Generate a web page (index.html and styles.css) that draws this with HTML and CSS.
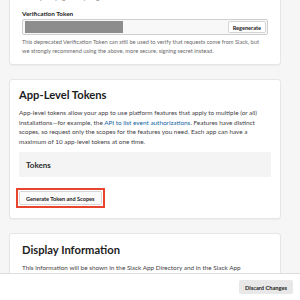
FILE: index.html
```html
<!doctype html>
<html lang="en">
  <head>
    <meta charset="UTF-8" />
    <meta name="viewport" content="width=device-width, initial-scale=1.0" />
    <title>App Credentials</title>
    <link rel="stylesheet" href="styles.css">
  </head>
  <body>
    <div class="page">
      <div class="card card-credentials">
        <p class="help cut">Slack by verifying its unique signature.</p>
        <div class="field-label">Verification Token</div>
        <div class="token-input">
          <div class="token-mask"></div>
          <button class="btn-small">Regenerate</button>
        </div>
        <p class="help">
          This deprecated Verification Token can still be used to verify that requests come from Slack, but<br>
          we strongly recommend using the above, more secure, signing secret instead.
        </p>
      </div>

      <div class="card card-tokens">
        <h2>App-Level Tokens</h2>
        <p class="text">
          App-level tokens allow your app to use platform features that apply to multiple (or all)<br>
          installations—for example, the <a href="#">API to list event authorizations</a>. Features have distinct<br>
          scopes, so request only the scopes for the features you need. Each app can have a<br>
          maximum of 10 app-level tokens at one time.
        </p>
        <div class="tokens-box">Tokens</div>
        <div class="highlight">
          <button class="btn-small btn-generate">Generate Token and Scopes</button>
        </div>
      </div>

      <div class="card card-display">
        <h2>Display Information</h2>
        <p class="text">
          This information will be shown in the Slack App Directory and in the Slack App<br>
          Launcher, and when your app is installed to a workspace.
        </p>
      </div>
    </div>

    <div class="save-bar">
      <button class="btn-discard">Discard Changes</button>
    </div>
  </body>
</html>
```

FILE: styles.css
```css
* {
  margin: 0;
  padding: 0;
  box-sizing: border-box;
}

body {
  font-family: 'Lato', 'Liberation Sans', sans-serif;
  background-color: #f6f6f6;
  color: #1d1c1d;
  overflow: hidden;
}

.page {
  margin-top: -16px;
  padding: 0 19px 0 9px;
}

.card {
  background: #ffffff;
  border: 1px solid #e6e6e6;
  border-radius: 3px;
  box-shadow: 0 1px 1px rgba(0, 0, 0, 0.04);
  margin-bottom: 14px;
}

.card-credentials {
  padding: 8px 12px 9px 12px;
}

.help {
  font-size: 5.7px;
  line-height: 9px;
  color: #6b6a6b;
  white-space: nowrap;
}

.help.cut {
  margin-bottom: 7px;
}

.field-label {
  font-size: 6.4px;
  font-weight: 700;
  line-height: 9px;
  color: #1d1c1d;
  margin-bottom: 1px;
}

.token-input {
  display: flex;
  align-items: center;
  justify-content: space-between;
  height: 16px;
  padding: 0 1px 0 2px;
  border: 1px solid #cfcfcf;
  border-radius: 2px;
  background: #f8f8f8;
  margin-bottom: 2px;
}

.token-mask {
  width: 98px;
  height: 12px;
  background: #8d8d8d;
}

.btn-small {
  font-family: 'Lato', 'Liberation Sans', sans-serif;
  font-size: 5.6px;
  font-weight: 700;
  color: #1d1c1d;
  background: #ffffff;
  border: 1px solid #d6d6d6;
  border-radius: 2px;
  height: 12px;
  padding: 0 4px;
}

.card h2 {
  font-size: 11.2px;
  font-weight: 700;
  line-height: 14px;
  color: #1d1c1d;
  margin-bottom: 6px;
}

.text {
  font-size: 6.4px;
  line-height: 9.5px;
  color: #454245;
  white-space: nowrap;
}

.text a {
  color: #1264a3;
  text-decoration: none;
}

.card-tokens {
  padding: 8px 9px 10px 9px;
}

.tokens-box {
  margin-top: 6px;
  height: 25px;
  padding: 0 7px;
  display: flex;
  align-items: center;
  background: #f4f4f4;
  font-size: 8px;
  font-weight: 700;
  color: #2c2c2c;
}

.highlight {
  display: inline-block;
  margin: 11px 0 0 -3px;
  padding: 1px;
  border: 2px solid #e8452e;
}

.btn-generate {
  display: block;
  height: 14px;
  padding: 0 6px;
  background: #fbfbfb;
}

.card-display {
  padding: 9px 12px 30px 12px;
  margin-bottom: 0;
}

.save-bar {
  position: fixed;
  left: 0;
  right: 0;
  bottom: 0;
  height: 27px;
  background: #ffffff;
  border-top: 1px solid #dddddd;
  display: flex;
  align-items: center;
  justify-content: flex-end;
  padding-right: 7px;
}

.btn-discard {
  font-family: 'Lato', 'Liberation Sans', sans-serif;
  font-size: 5.7px;
  font-weight: 700;
  color: #1d1c1d;
  background: #e8e8e8;
  border: none;
  border-radius: 2px;
  height: 14px;
  padding: 0 6px;
}
```
